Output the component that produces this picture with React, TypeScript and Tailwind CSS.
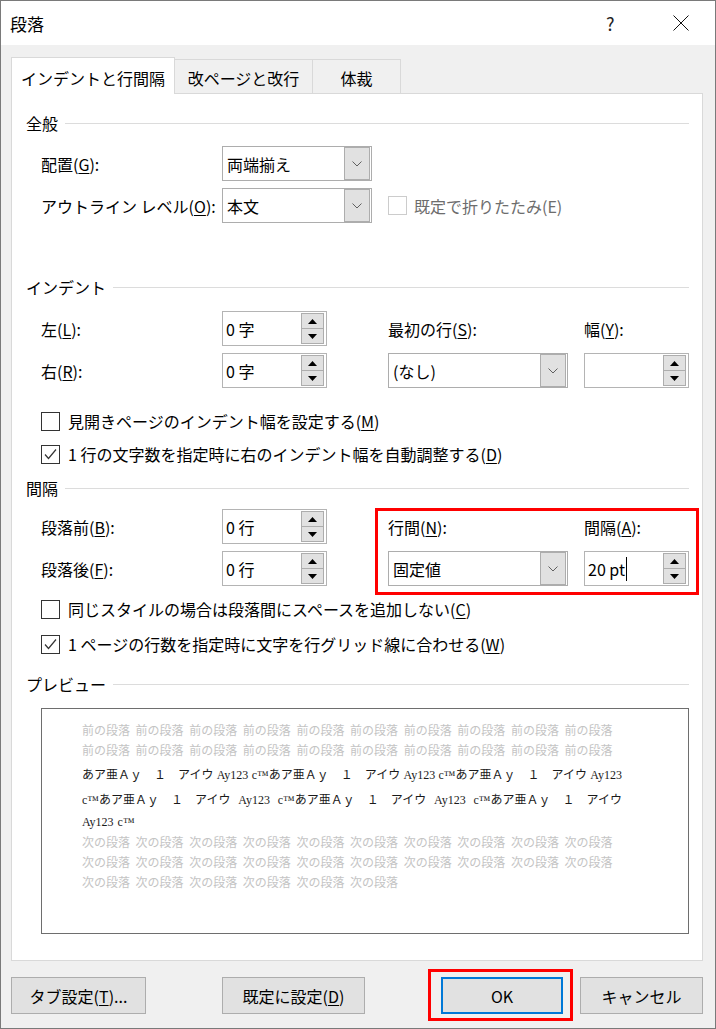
import React from "react";

// Word "段落" (paragraph) dialog, Windows 10 look

function Chevron() {
  return (
    <svg width="10" height="6" viewBox="0 0 10 6" fill="none" aria-hidden="true">
      <path d="M0.5 0.5 L5 5 L9.5 0.5" stroke="#606060" strokeWidth="1" />
    </svg>
  );
}

function Tri({ up }: { up?: boolean }) {
  return (
    <svg width="9" height="5" viewBox="0 0 9 5" aria-hidden="true">
      <path d={up ? "M4.5 0 L9 5 L0 5 Z" : "M0 0 L9 0 L4.5 5 Z"} fill="#000" />
    </svg>
  );
}

function Combo({ value, w }: { value: string; w: string }) {
  return (
    <div className={`flex h-[35px] ${w} items-center border border-[#adadad] bg-white`}>
      <span className="flex-1 whitespace-nowrap pl-[4px]">{value}</span>
      <div className="mr-px flex h-[33px] w-[26px] shrink-0 items-center justify-center border border-[#adadad] bg-[#e1e1e1]">
        <Chevron />
      </div>
    </div>
  );
}

function Spin({ value, cursor }: { value?: string; cursor?: boolean }) {
  return (
    <div className="flex h-[35px] w-[105px] items-center border border-[#b4b4b4] bg-white pl-[3px] pr-[2px]">
      <div className="flex flex-1 items-center whitespace-nowrap">
        <span>{value}</span>
        {cursor && <span className="ml-px h-[24px] w-px bg-black" />}
      </div>
      <div className="flex w-[23px] shrink-0 flex-col">
        <div className="flex h-[16px] items-center justify-center border border-[#adadad] bg-[#e1e1e1]">
          <Tri up />
        </div>
        <div className="-mt-px flex h-[16px] items-center justify-center border border-[#adadad] bg-[#e1e1e1]">
          <Tri />
        </div>
      </div>
    </div>
  );
}

function CheckBox({ checked, disabled }: { checked?: boolean; disabled?: boolean }) {
  return (
    <div
      className={`flex h-[19px] w-[19px] shrink-0 items-center justify-center border bg-white ${
        disabled ? "border-[#cccccc]" : "border-[#333333]"
      }`}
    >
      {checked && (
        <svg width="15" height="15" viewBox="0 0 15 15" fill="none" aria-hidden="true">
          <path d="M2 7.5 L5.5 11.5 L13 2.5" stroke="#333333" strokeWidth="1.2" />
        </svg>
      )}
    </div>
  );
}

function CheckRow({ checked, children, mt }: { checked?: boolean; children: React.ReactNode; mt: string }) {
  return (
    <div className={`${mt} flex h-[24px] items-center gap-[8px] pl-[15px]`}>
      <CheckBox checked={checked} />
      <span className="whitespace-nowrap">{children}</span>
    </div>
  );
}

function Section({ title, mt }: { title: string; mt: string }) {
  return (
    <div className={`${mt} flex h-[20px] items-center gap-[7px]`}>
      <span className="whitespace-nowrap">{title}</span>
      <div className="h-px flex-1 bg-[#dcdcdc]" />
    </div>
  );
}

function Btn({ children, w, ok }: { children: React.ReactNode; w: string; ok?: boolean }) {
  return (
    <div
      className={`flex h-[37px] ${w} items-center justify-center whitespace-nowrap bg-[#e1e1e1] ${
        ok ? "border-2 border-[#0078d7]" : "border border-[#adadad]"
      }`}
    >
      {children}
    </div>
  );
}

const prevUnit = "あア亜Ａｙ　１　アイウ Ay123 c™";

export default function App() {
  const before = Array.from({ length: 10 }, () => "前の段落");
  const after = Array.from({ length: 10 }, () => "次の段落");
  const after3 = Array.from({ length: 6 }, () => "次の段落");

  return (
    <div className="flex h-[1029px] w-[716px] flex-col border border-[#7a7a7a] bg-[#f0f0f0] font-['Noto_Sans_CJK_JP','Noto_Sans',sans-serif] text-[16px] leading-none text-black">
      {/* Title bar */}
      <div className="flex h-[44px] shrink-0 items-center bg-white pl-[9px]">
        <span className="flex-1 text-[17px]">段落</span>
        <span className="w-[20px] text-[18px] text-[#222]">?</span>
        <div className="ml-[47px] mr-[26px] flex items-center">
          <svg width="16" height="16" viewBox="0 0 16 16" aria-hidden="true">
            <path d="M0.5 0.5 L15.5 15.5 M15.5 0.5 L0.5 15.5" stroke="#111" strokeWidth="1" />
          </svg>
        </div>
      </div>

      {/* Tabs */}
      <div className="ml-[10px] mt-[12px] flex h-[36px] items-end">
        <div className="relative z-10 -mb-px flex h-[37px] w-[164px] items-center justify-center whitespace-nowrap border border-b-0 border-[#d9d9d9] bg-white pt-[4px]">
          インデントと行間隔
        </div>
        <div className="flex h-[34px] w-[138px] items-center justify-center whitespace-nowrap border-r border-t border-[#d9d9d9] pt-[3px]">
          改ページと改行
        </div>
        <div className="flex h-[34px] w-[88px] items-center justify-center border-r border-t border-[#d9d9d9] pt-[3px]">
          体裁
        </div>
      </div>

      {/* Panel */}
      <div className="relative ml-[10px] flex h-[868px] w-[692px] flex-col border border-[#d9d9d9] bg-white pl-[14px] pr-[13px]">
        <Section title="全般" mt="mt-[19px]" />
        <div className="mt-[13px] flex h-[35px] items-center pl-[15px]">
          <div className="w-[181px] whitespace-nowrap">
            配置(<u className="underline-offset-2">G</u>):
          </div>
          <Combo value="両端揃え" w="w-[150px]" />
        </div>
        <div className="mt-[7px] flex h-[35px] items-center pl-[15px]">
          <div className="w-[181px] whitespace-nowrap">
            アウトライン レベル(<u className="underline-offset-2">O</u>):
          </div>
          <Combo value="本文" w="w-[150px]" />
          <div className="ml-[16px] flex items-center gap-[7px] text-[#6d6d6d]">
            <CheckBox disabled />
            <span className="whitespace-nowrap">既定で折りたたみ(E)</span>
          </div>
        </div>

        <Section title="インデント" mt="mt-[54px]" />
        <div className="mt-[14px] flex h-[35px] items-center pl-[15px]">
          <div className="w-[181px]">
            左(<u className="underline-offset-2">L</u>):
          </div>
          <Spin value="0 字" />
          <div className="ml-[61px] w-[196px] whitespace-nowrap">
            最初の行(<u className="underline-offset-2">S</u>):
          </div>
          <div className="whitespace-nowrap">
            幅(<u className="underline-offset-2">Y</u>):
          </div>
        </div>
        <div className="mt-[7px] flex h-[35px] items-center pl-[15px]">
          <div className="w-[181px]">
            右(<u className="underline-offset-2">R</u>):
          </div>
          <Spin value="0 字" />
          <div className="ml-[61px]">
            <Combo value="(なし)" w="w-[180px]" />
          </div>
          <div className="ml-[16px]">
            <Spin />
          </div>
        </div>

        <CheckRow mt="mt-[21px]">
          見開きページのインデント幅を設定する(<u className="underline-offset-2">M</u>)
        </CheckRow>
        <CheckRow mt="mt-[9px]" checked>
          1 行の文字数を指定時に右のインデント幅を自動調整する(<u className="underline-offset-2">D</u>)
        </CheckRow>

        <Section title="間隔" mt="mt-[12px]" />
        <div className="mt-[11px] flex h-[35px] items-center pl-[15px]">
          <div className="w-[181px] whitespace-nowrap">
            段落前(<u className="underline-offset-2">B</u>):
          </div>
          <Spin value="0 行" />
          <div className="ml-[61px] w-[196px] whitespace-nowrap">
            行間(<u className="underline-offset-2">N</u>):
          </div>
          <div className="whitespace-nowrap">
            間隔(<u className="underline-offset-2">A</u>):
          </div>
        </div>
        <div className="mt-[7px] flex h-[35px] items-center pl-[15px]">
          <div className="w-[181px] whitespace-nowrap">
            段落後(<u className="underline-offset-2">F</u>):
          </div>
          <Spin value="0 行" />
          <div className="ml-[61px]">
            <Combo value="固定値" w="w-[180px]" />
          </div>
          <div className="ml-[16px]">
            <Spin value="20 pt" cursor />
          </div>
        </div>

        <CheckRow mt="mt-[11px]">
          同じスタイルの場合は段落間にスペースを追加しない(<u className="underline-offset-2">C</u>)
        </CheckRow>
        <CheckRow mt="mt-[11px]" checked>
          1 ページの行数を指定時に文字を行グリッド線に合わせる(<u className="underline-offset-2">W</u>)
        </CheckRow>

        <Section title="プレビュー" mt="mt-[18px]" />
        <div className="ml-[15px] mt-[14px] flex h-[226px] w-[648px] flex-col border border-[#6e6e6e] bg-white pl-[40px] pt-[11px] text-[12px]">
          {[before, before].map((row, i) => (
            <div key={`b${i}`} className="flex h-[20px] items-center gap-[5.6px] whitespace-nowrap text-[#c4c4c4]">
              {row.map((t, j) => (
                <span key={j}>{t}</span>
              ))}
            </div>
          ))}
          <div className="flex w-[540px] flex-col font-['Liberation_Serif','Noto_Sans_CJK_JP',serif] text-[#1a1a1a]">
            <div className="mt-[2px] flex h-[26px] items-center justify-between whitespace-nowrap">
              {`${prevUnit}${prevUnit}あア亜Ａｙ　１　アイウ Ay123`.split(" ").map((t, i) => (
                <span key={i}>{t}</span>
              ))}
            </div>
            <div className="flex h-[24px] items-center justify-between whitespace-nowrap">
              {`c™${prevUnit}${prevUnit}あア亜Ａｙ　１　アイウ`.split(" ").map((t, i) => (
                <span key={i}>{t}</span>
              ))}
            </div>
            <div className="flex h-[20px] items-center gap-[4px] whitespace-nowrap">
              <span>Ay123</span>
              <span>c™</span>
            </div>
          </div>
          {[after, after, after3].map((row, i) => (
            <div key={`a${i}`} className="flex h-[20px] items-center gap-[5.6px] whitespace-nowrap text-[#c4c4c4]">
              {row.map((t, j) => (
                <span key={j}>{t}</span>
              ))}
            </div>
          ))}
        </div>

        {/* annotation around line spacing */}
        <div className="pointer-events-none absolute left-[363px] top-[414px] h-[87px] w-[324px] border-[3px] border-[#ff0000]" />
      </div>

      {/* Bottom buttons */}
      <div className="ml-[10px] mt-[16px] flex items-center">
        <Btn w="w-[135px]">
          タブ設定(<u className="underline-offset-2">T</u>)...
        </Btn>
        <div className="ml-[76px]">
          <Btn w="w-[143px]">
            既定に設定(<u className="underline-offset-2">D</u>)
          </Btn>
        </div>
        <div className="relative ml-[76px]">
          <Btn w="w-[122px]" ok>
            OK
          </Btn>
          <div className="pointer-events-none absolute -bottom-[7px] -left-[13px] -right-[10px] -top-[8px] border-[3px] border-[#ff0000]" />
        </div>
        <div className="ml-[17px]">
          <Btn w="w-[123px]">キャンセル</Btn>
        </div>
      </div>
    </div>
  );
}
